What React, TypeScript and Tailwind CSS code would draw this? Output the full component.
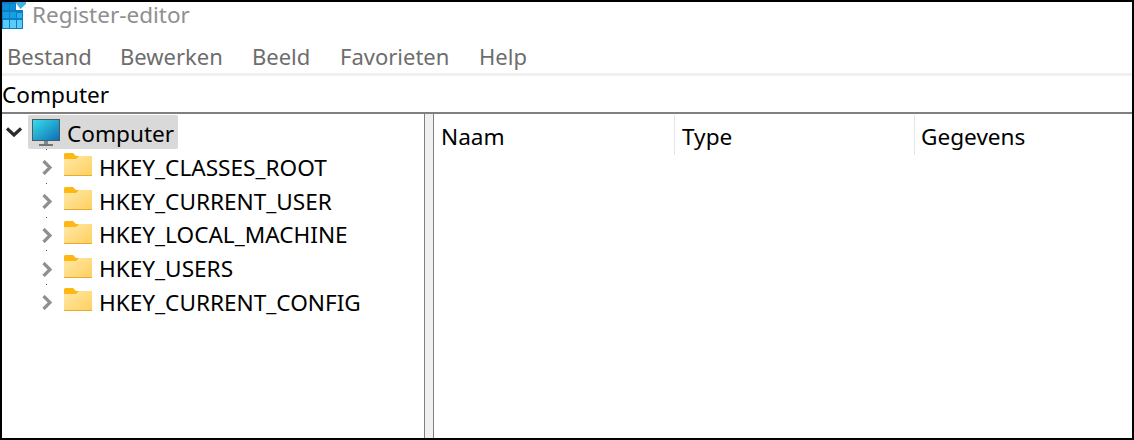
const menus = [
  { label: "Bestand", width: "w-[113px]" },
  { label: "Bewerken", width: "w-[132px]" },
  { label: "Beeld", width: "w-[88px]" },
  { label: "Favorieten", width: "w-[139px]" },
  { label: "Help", width: "w-auto" },
];

const hives = ["HKEY_CLASSES_ROOT", "HKEY_CURRENT_USER", "HKEY_LOCAL_MACHINE", "HKEY_USERS", "HKEY_CURRENT_CONFIG"];

function RegistryIcon() {
  return (
    <svg width="24" height="27" viewBox="0 0 24 27" className="shrink-0">
      <path d="M0 0h14v8h7v19H0z" fill="#0a7fc4" />
      <path d="M13 0h11v2l-5.5 5z" fill="#3fb2e6" />
      <path d="M1 2h6v6H1zM8 2h5v6H8z" fill="#0f8fd6" />
      <path d="M1 10h6v6H1zM8 10h6v6H8z" fill="#16a0e2" />
      <path d="M15 11h5v5h-5z" fill="#2aaeea" />
      <path d="M1 18h6v8H1zM8 18h6v8H8zM15 18h5v8h-5z" fill="#5ccbf7" />
    </svg>
  );
}

function MonitorIcon() {
  return (
    <svg width="30" height="27" viewBox="0 0 30 27" className="shrink-0">
      <defs>
        <linearGradient id="screen" x1="0" y1="0" x2="1" y2="1">
          <stop offset="0" stopColor="#35e0ea" />
          <stop offset="1" stopColor="#0f6cb5" />
        </linearGradient>
      </defs>
      <rect x="0.5" y="0.5" width="27" height="21" fill="url(#screen)" stroke="#4a5a66" />
      <rect x="12" y="22" width="4" height="3" fill="#7d8a94" />
      <rect x="7" y="25" width="14" height="2" fill="#6b7880" />
    </svg>
  );
}

function FolderIcon() {
  return (
    <svg width="28" height="23" viewBox="0 0 28 23" className="shrink-0">
      <defs>
        <linearGradient id="folder" x1="0" y1="0" x2="1" y2="1">
          <stop offset="0" stopColor="#ffe9a8" />
          <stop offset="1" stopColor="#ffcf5e" />
        </linearGradient>
      </defs>
      <path d="M0 1.5Q0 0 1.5 0H9l3 3h16v3H0z" fill="#fdb813" />
      <path d="M0 6h12l3-3h13v20H0z" fill="url(#folder)" />
      <rect y="22" width="28" height="1" fill="#e9ab2c" />
    </svg>
  );
}

function Chevron({ open }: { open?: boolean }) {
  return open ? (
    <svg width="16" height="10" viewBox="0 0 16 10" className="shrink-0">
      <path d="M1 1.5 8 8l7-6.5" fill="none" stroke="#2b2b2b" strokeWidth="3.2" />
    </svg>
  ) : (
    <svg width="10" height="15" viewBox="0 0 10 15" className="shrink-0">
      <path d="M1.5 1 8 7.5 1.5 14" fill="none" stroke="#8f8f8f" strokeWidth="3.2" />
    </svg>
  );
}

export default function App() {
  return (
    <div className="w-[1134px] h-[440px] border-2 border-black bg-white flex flex-col overflow-hidden font-['Noto_Sans',sans-serif] text-[22.6px] leading-[34px] text-black">
      <div className="h-[30px] flex items-start shrink-0">
        <RegistryIcon />
        <span className="ml-[6px] leading-[26px] text-[22.5px] text-[#8f8f8f]">Register-editor</span>
      </div>
      <div className="h-[41px] flex items-center pl-[5px] pt-[7px] shrink-0 text-[22px] text-[#6d6d6d]">
        {menus.map((m) => (
          <span key={m.label} className={m.width}>
            {m.label}
          </span>
        ))}
      </div>
      <div className="h-[3px] bg-[#f0f0f0] shrink-0" />
      <div className="h-[36px] flex items-center pt-[2px] shrink-0">Computer</div>
      <div className="h-[2px] bg-[#808080] shrink-0" />
      <div className="flex-1 flex min-h-0">
        <div className="w-[422px] shrink-0 pt-[1px] flex flex-col">
          <div className="h-[34px] flex items-center pl-[4px] gap-[6px]">
            <Chevron open />
            <div className="h-[34px] w-[150px] bg-[#d9d9d9] rounded-[2px] flex items-center pl-[4px] gap-[5px]">
              <MonitorIcon />
              <span className="pt-[3px]">Computer</span>
            </div>
          </div>
          <div className="pt-[2px] flex flex-col">
            {hives.map((h) => (
              <div key={h} className="relative h-[33.75px] flex items-center pl-[40px]">
                <span className="absolute left-[44px] -top-[2px] w-px h-px bg-[#555]" />
                <Chevron />
                <span className="ml-[12px] -mt-[6px]">
                  <FolderIcon />
                </span>
                <span className="ml-[7px]">{h}</span>
              </div>
            ))}
          </div>
        </div>
        <div className="w-[10px] shrink-0 bg-[#f0f0f0] border-x border-[#808080]" />
        <div className="flex-1 flex pt-[1px] h-[41px]">
          <div className="w-[241px] pl-[7px] pt-[5px] h-[40px] border-r border-[#e5e5e5]">Naam</div>
          <div className="w-[240px] pl-[7px] pt-[5px] h-[40px] border-r border-[#e5e5e5]">Type</div>
          <div className="pl-[6px] pt-[5px] h-[40px]">Gegevens</div>
        </div>
      </div>
    </div>
  );
}
